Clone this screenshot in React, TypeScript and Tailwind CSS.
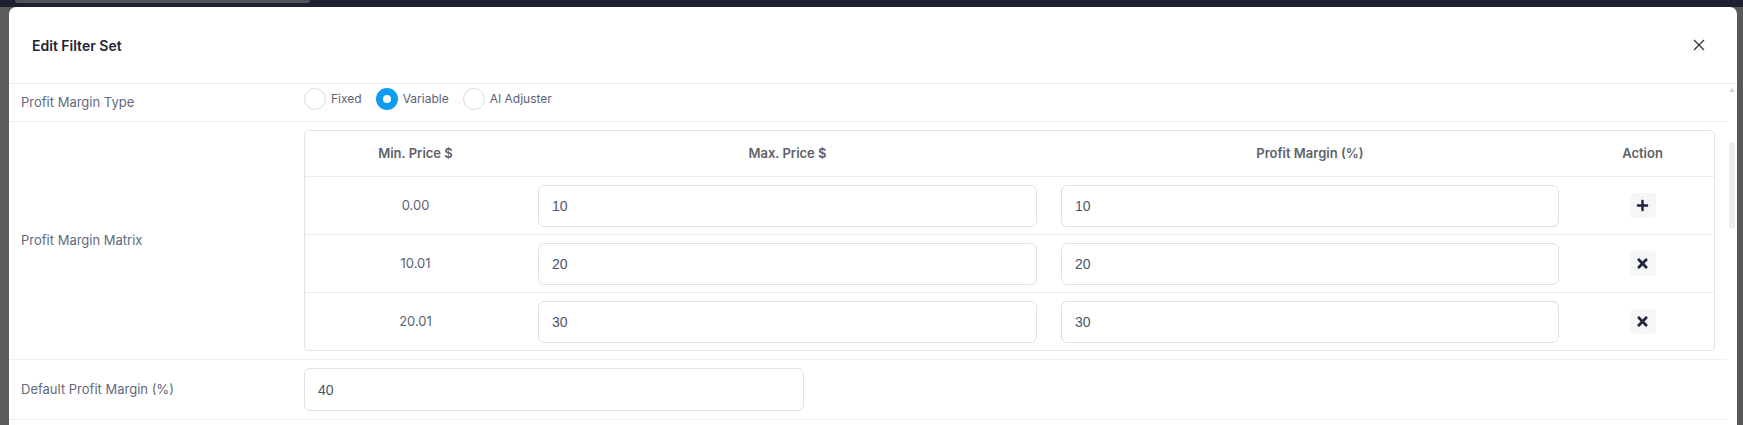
import { FaPlus, FaTimes } from "react-icons/fa";

// Edit Filter Set modal — variable profit margin matrix

const rows = [
  { min: "0.00", max: "10", margin: "10", add: true },
  { min: "10.01", max: "20", margin: "20", add: false },
  { min: "20.01", max: "30", margin: "30", add: false },
];

const inputBase =
  "rounded-[6px] border border-[#dfe0e8] bg-white px-[13px] font-['Liberation_Sans',Arial,sans-serif] text-[14px] text-[#4d5469] outline-none";

function Radio({ label, checked }: { label: string; checked?: boolean }) {
  return (
    <label className="flex items-center gap-[5px]">
      {checked ? (
        <span className="h-[22px] w-[22px] rounded-full border-[7px] border-[#0e9cf2] bg-white" />
      ) : (
        <span className="h-[22px] w-[22px] rounded-full border border-[#d9dce4] bg-white" />
      )}
      <span className="text-[12px] text-[#5b6275]">{label}</span>
    </label>
  );
}

function FormRow({
  label,
  className,
  children,
}: {
  label: string;
  className?: string;
  children: React.ReactNode;
}) {
  return (
    <div className={`grid grid-cols-[295px_1fr] border-b border-[#eeeeee] pr-3 ${className ?? ""}`}>
      <div className="flex items-center pl-3 text-[13px] text-[#626a7d]">{label}</div>
      <div>{children}</div>
    </div>
  );
}

export default function App() {
  return (
    <div className="flex h-[425px] w-[1743px] flex-col overflow-hidden bg-[#5d5d5d] font-['Inter',sans-serif]">
      {/* page chrome peeking above the overlay */}
      <div className="h-[7px] shrink-0 bg-[#1c2130]">
        <div className="ml-[15px] h-[3px] w-[295px] rounded-b-[3px] bg-[#4f535b]" />
      </div>

      <div className="flex flex-1">
        <div className="w-[9px] shrink-0 bg-[#5d5d5d]" />

        {/* modal */}
        <div className="flex flex-1 flex-col rounded-t-[7px] bg-white">
          <div className="flex h-[77px] shrink-0 items-center justify-between border-b border-[#ececec] pl-[23px] pr-[32px]">
            <h2 className="text-[14px] font-semibold text-[#1f2336]">Edit Filter Set</h2>
            <svg width="12" height="12" viewBox="0 0 12 12" className="text-[#333]">
              <path d="M1 1L11 11M11 1L1 11" stroke="currentColor" strokeWidth="1.3" />
            </svg>
          </div>

          <div className="flex flex-1">
            <div className="flex-1">
              <FormRow label="Profit Margin Type" className="h-[38px]">
                <div className="flex items-start gap-[14px] pt-[4px]">
                  <Radio label="Fixed" />
                  <Radio label="Variable" checked />
                  <Radio label="AI Adjuster" />
                </div>
              </FormRow>

              <FormRow label="Profit Margin Matrix" className="py-2">
                <div className="overflow-hidden rounded-[5px] border border-[#e2e2e4]">
                  <div className="grid h-[46px] grid-cols-[221px_523px_522px_1fr] items-center border-b border-[#ececec] text-[13px] font-semibold text-[#606268]">
                    <div className="text-center">Min. Price $</div>
                    <div className="text-center">Max. Price $</div>
                    <div className="text-center">Profit Margin (%)</div>
                    <div className="text-center">Action</div>
                  </div>
                  {rows.map((r, i) => (
                    <div
                      key={r.min}
                      className={`grid grid-cols-[221px_523px_522px_1fr] items-center ${
                        i < rows.length - 1 ? "h-[58px] border-b border-[#ececec]" : "h-[57px]"
                      }`}
                    >
                      <div className="text-center text-[13px] text-[#5b6276]">{r.min}</div>
                      <div className="px-3">
                        <input className={`${inputBase} h-[42px] w-full`} defaultValue={r.max} />
                      </div>
                      <div className="px-3">
                        <input className={`${inputBase} h-[42px] w-full`} defaultValue={r.margin} />
                      </div>
                      <div className="flex justify-center">
                        <button className="flex h-[25px] w-[26px] items-center justify-center rounded-[4px] bg-[#f6f6f7] text-[#1e2540]">
                          {r.add ? <FaPlus size={13} /> : <FaTimes size={15} />}
                        </button>
                      </div>
                    </div>
                  ))}
                </div>
              </FormRow>

              <FormRow label="Default Profit Margin (%)" className="py-2">
                <input className={`${inputBase} h-[43px] w-[500px]`} defaultValue="40" />
              </FormRow>
            </div>

            {/* modal body scrollbar */}
            <div className="flex w-[10px] shrink-0 flex-col items-center">
              <div className="mt-[4px] h-0 w-0 border-x-[3px] border-b-[4px] border-x-transparent border-b-[#d2d2d2]" />
              <div className="mt-[50px] h-[87px] w-[6px] rounded-full bg-[#eeeeee]" />
            </div>
          </div>
        </div>

        <div className="w-[6px] shrink-0 bg-[#585858]" />
      </div>
    </div>
  );
}
